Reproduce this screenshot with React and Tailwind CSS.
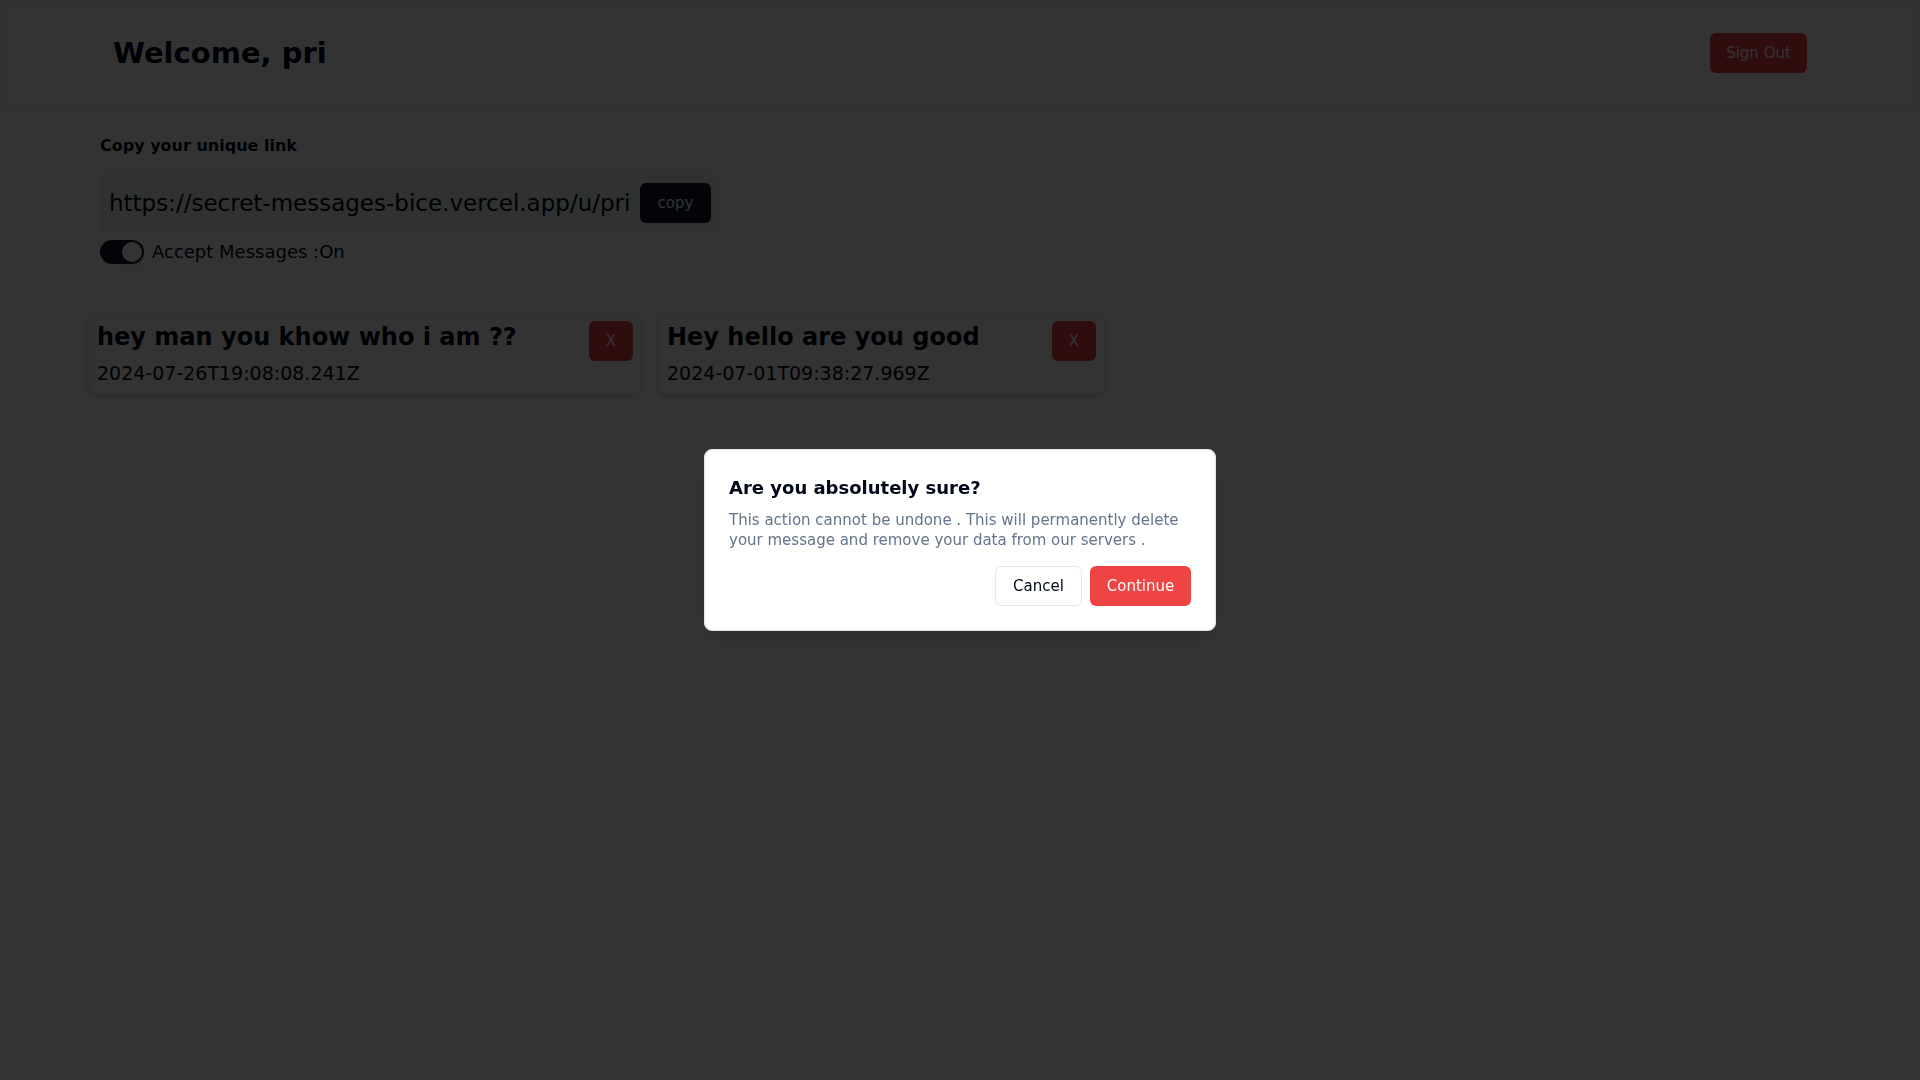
import React, { useState } from 'react';

const messages = [
  { id: 1, content: 'hey man you khow who i am ??', createdAt: '2024-07-26T19:08:08.241Z', width: 'w-[554px]' },
  { id: 2, content: 'Hey hello are you good', createdAt: '2024-07-01T09:38:27.969Z', width: 'w-[447px]' },
];

const MessageCard = ({ message, onDelete }) => (
  <div
    className={`flex justify-between items-start p-2 border border-[#e4ebea] rounded-lg shadow-[0_3px_4px_1px_rgb(0_0_0/0.1)] ${message.width}`}
  >
    <div>
      <h3 className="text-2xl leading-8 font-bold whitespace-nowrap">{message.content}</h3>
      <p className="mt-2 text-[19px] leading-6 whitespace-nowrap">{message.createdAt}</p>
    </div>
    <button
      onClick={onDelete}
      aria-label="Delete message"
      className="h-10 w-11 shrink-0 rounded-md bg-[#ef4444] text-slate-50 text-[15px] font-medium"
    >
      X
    </button>
  </div>
);

const ConfirmDialog = ({ onClose }) => (
  <div className="fixed inset-0 flex items-center justify-center bg-black/80">
    <div
      role="alertdialog"
      aria-labelledby="confirm-title"
      aria-describedby="confirm-text"
      className="w-full max-w-lg p-6 grid gap-4 bg-white border border-slate-200 rounded-lg shadow-lg"
    >
      <div className="flex flex-col gap-2">
        <h2 id="confirm-title" className="text-lg leading-7 font-semibold">Are you absolutely sure?</h2>
        <p id="confirm-text" className="text-[15px] leading-5 text-[#64748b]">
          This action cannot be undone . This will permanently delete your message and remove your data from our servers .
        </p>
      </div>
      <div className="flex justify-end gap-2">
        <button
          onClick={onClose}
          className="h-10 w-[87px] rounded-md border border-slate-200 bg-white text-[15px] font-medium"
        >
          Cancel
        </button>
        <button
          onClick={onClose}
          className="h-10 w-[101px] rounded-md bg-[#ef4444] text-slate-50 text-[15px] font-medium"
        >
          Continue
        </button>
      </div>
    </div>
  </div>
);

const App = () => {
  const [accepting, setAccepting] = useState(true);
  const [confirmOpen, setConfirmOpen] = useState(true);

  return (
    <div className="min-h-screen bg-white text-[#020817] font-['DejaVu_Sans',sans-serif]">
      <header className="flex items-center justify-between px-28 py-8 border border-[#e4ebea]">
        <h1 className="text-[29px] leading-10 font-bold">Welcome, pri</h1>
        <button className="h-10 w-[97px] rounded-md bg-[#ef4444] text-slate-50 text-[15px] font-medium">
          Sign Out
        </button>
      </header>

      <main className="px-[88px] pt-7">
        <section className="px-3">
          <h2 className="text-base leading-6 font-semibold">Copy your unique link</h2>
          <div className="mt-4 w-[620px] flex items-center justify-between p-2 rounded-md border border-[#eef3f2] bg-[#eef3f2]">
            <a href="https://secret-messages-bice.vercel.app/u/pri" className="text-[23px] leading-8">
              https://secret-messages-bice.vercel.app/u/pri
            </a>
            <button className="h-10 w-[71px] rounded-md bg-[#0f172a] text-slate-50 text-[15px] font-medium">
              copy
            </button>
          </div>
          <label className="mt-2 w-fit flex items-center gap-2">
            <input
              type="checkbox"
              role="switch"
              checked={accepting}
              onChange={() => setAccepting(!accepting)}
              className="peer sr-only"
            />
            <span className="w-11 h-6 p-0.5 flex rounded-full bg-slate-200 peer-checked:bg-[#0f172a] peer-checked:justify-end">
              <span className="w-5 h-5 rounded-full bg-white shadow-lg"></span>
            </span>
            <span className="text-lg leading-6">Accept Messages :{accepting ? 'On' : 'Off'}</span>
          </label>
        </section>

        <section className="mt-12 flex flex-wrap gap-4">
          {messages.map((message) => (
            <MessageCard key={message.id} message={message} onDelete={() => setConfirmOpen(true)} />
          ))}
        </section>
      </main>

      {confirmOpen && <ConfirmDialog onClose={() => setConfirmOpen(false)} />}
    </div>
  );
};

export default App;
